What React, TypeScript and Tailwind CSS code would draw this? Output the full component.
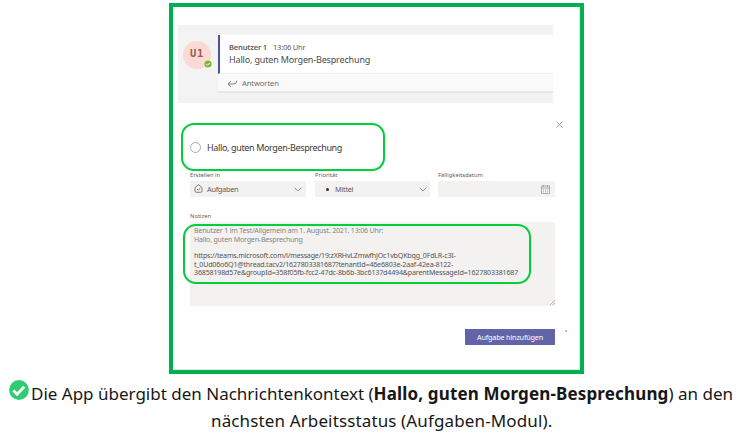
import React from "react";

function MessageCard() {
  return (
    <div className="ml-[5px] mt-[18px] flex h-[78px] w-[375px] bg-[#f3f3f3] pt-[10px]">
      <div className="relative ml-[5px] mt-[6px] flex h-[28px] w-[28px] shrink-0 items-center justify-center rounded-full bg-[#fbdad5] pb-[3px] font-['DejaVu_Sans_Mono',monospace] text-[10.5px] font-bold tracking-[0.6px] text-[#9a5a52]">
        <span>U1</span>
        <svg className="absolute -right-px bottom-px h-[8px] w-[8px]" viewBox="0 0 8 8">
          <circle cx="4" cy="4" r="3.6" fill="#7fba3a" />
          <path d="M2.3 4.1 3.5 5.3 5.7 3" fill="none" stroke="#fff" strokeWidth=".9" />
        </svg>
      </div>
      <div className="ml-[7px] h-[58px] flex-1 border-b-2 border-[#e6e6e6] bg-[#fafafa]">
        <div className="h-[39px] border-b border-l-2 border-b-[#f0f0f0] border-l-[#4f50a0] bg-white pl-[9px] pt-[7px]">
          <div className="flex h-[12px] items-center text-[7.6px] text-[#5c5c5c]">
            <span className="w-[44px] font-semibold tracking-[-0.2px]">Benutzer 1</span>
            <span className="tracking-[-0.28px]">13:06 Uhr</span>
          </div>
          <div className="h-[13px] text-[9px] leading-[12px] tracking-[-0.16px] text-[#4c4c4c]">Hallo, guten Morgen-Besprechung</div>
        </div>
        <div className="flex h-[18px] items-center pl-[9px] text-[7.6px] tracking-[-0.1px] text-[#6c6c6c]">
          <svg className="mr-[4px] h-[8px] w-[11px]" viewBox="0 0 11 8" fill="none" stroke="#707070" strokeWidth=".9">
            <path d="M4 2 1 5l3 3M1 5h5.500Q9.500 5 10 1.500" />
          </svg>
          <span className="pt-px">Antworten</span>
        </div>
      </div>
    </div>
  );
}

function Chevron() {
  return (
    <svg className="h-[5px] w-[8px]" viewBox="0 0 8 5" fill="none" stroke="#777" strokeWidth=".8">
      <path d="M.7.700 4 4 7.300.700" />
    </svg>
  );
}

function Fields() {
  return (
    <div className="flex h-[26px] text-[#5c5c5c]">
      <div className="w-[125px]">
        <div className="h-[10px] text-[5.8px] leading-[8px]">Erstellen in</div>
        <div className="flex h-[16px] w-[116px] items-center rounded-[1px] bg-[#f3f2f1] pl-[4px] pr-[4px] text-[7.4px] tracking-[-0.32px]">
          <svg className="mb-px mr-[4px] h-[9px] w-[9px]" viewBox="0 0 9 9" fill="none" stroke="#555" strokeWidth=".7">
            <path d="M1 3.600 4.500.700 8 3.600V7Q8 8.300 6.700 8.300H2.300Q1 8.300 1 7ZM3 5l1.200 1.200L6.400 4" />
          </svg>
          <span className="flex-1 pt-[2px]">Aufgaben</span>
          <Chevron />
        </div>
      </div>
      <div className="w-[123px]">
        <div className="h-[10px] text-[5.8px] leading-[8px]">Priorität</div>
        <div className="flex h-[16px] w-[115px] items-center rounded-[1px] bg-[#f3f2f1] pl-[11px] pr-[3px] text-[7.4px] tracking-[-0.3px]">
          <span className="mr-[6px] h-[3px] w-[3px] rounded-full bg-[#333]" />
          <span className="flex-1 pt-[2px]">Mittel</span>
          <Chevron />
        </div>
      </div>
      <div>
        <div className="h-[10px] text-[5.8px] leading-[8px]">Fälligkeitsdatum</div>
        <div className="flex h-[16px] w-[117px] items-center justify-end rounded-[1px] bg-[#f3f2f1] pr-[5px]">
          <svg className="h-[9px] w-[9px]" viewBox="0 0 9 9" fill="none" stroke="#999" strokeWidth=".8">
            <path d="M.5 1h8v7.500h-8zM.5 3h8M2.500 0v2M6.500 0v2" />
            <path d="M2 5h5M2 6.800h5" strokeDasharray="1 1" />
          </svg>
        </div>
      </div>
    </div>
  );
}

function Notes() {
  return (
    <div className="relative h-[84px] w-[365px] rounded-[1px] bg-[#f3f2f1] pl-[4px] pt-[4px] text-[7.1px] leading-[8.5px] whitespace-nowrap text-[#555]">
      <div className="tracking-[-0.21px] text-[#858585]">
        <div>Benutzer 1 im Test/Allgemein am 1. August. 2021. 13:06 Uhr:</div>
        <div>Hallo, guten Morgen-Besprechung</div>
      </div>
      <div className="mt-[8px] tracking-[-0.19px]">https://teams.microsoft.com/l/message/19:zXRHvLZmwfhJOc1vbQKbqg_0FdLR-c3I-</div>
      <div className="tracking-[-0.19px]">t_0Ud06o6Q1@thread.tacv2/1627803381687?tenantId=46e6803e-2aaf-42ea-8122-</div>
      <div className="tracking-[-0.17px]">36858198d57e&amp;groupId=358f05fb-fcc2-47dc-8b6b-3bc6137d4494&amp;parentMessageId=1627803381687</div>
      <div className="absolute -left-[7px] top-[2px] h-[60px] w-[348px] rounded-[13px] border-2 border-[#00cf3a]" />
      <svg className="absolute bottom-[1px] right-0 h-[5px] w-[5px]" viewBox="0 0 5 5" stroke="#999" strokeWidth=".7">
        <path d="M0 5 5 0M2.500 5 5 2.500" />
      </svg>
    </div>
  );
}

export default function App() {
  return (
    <div className="h-[437px] w-[738px] overflow-hidden bg-white pt-[3px] font-['Noto_Sans','Open_Sans',sans-serif]">
      <div className="ml-[169px] flex h-[371px] w-[415px] flex-col border-4 border-[#00b050] bg-white shadow-[inset_-1px_-1px_0_#d9efe3]">
        <MessageCard />
        <div className="mt-[18px] flex h-[50px] justify-between pl-[8px] pr-[17px]">
          <div className="mt-[2px] flex h-[48px] w-[204px] items-center rounded-[13px] border-2 border-[#00cf3a] pl-[7px] text-[9px] tracking-[-0.36px] text-[#3a3a3a]">
            <span className="mr-[6px] h-[11px] w-[11px] rounded-full border border-[#aaa]" />
            <span className="pt-px">Hallo, guten Morgen-Besprechung</span>
          </div>
          <svg className="h-[7px] w-[7px]" viewBox="0 0 7 7" stroke="#888" strokeWidth=".8">
            <path d="M.5.500 6.500 6.500M6.500.500.500 6.500" />
          </svg>
        </div>
        <div className="pl-[17px]">
          <Fields />
          <div className="mt-[14px] h-[11px] pt-px text-[5.8px] leading-[8px] text-[#5c5c5c]">Notizen</div>
          <Notes />
        </div>
        <div className="mt-[23px] flex pl-[292px]">
          <button className="h-[16px] w-[90px] bg-[#6264a7] text-[7.2px] leading-[16px] tracking-[-0.15px] text-white">Aufgabe hinzufügen</button>
          <span className="ml-[10px] mt-[1px] h-[2px] w-[2px] bg-[#f5a0a0]" />
        </div>
      </div>
      <p className="ml-[9px] mt-[6px] w-[726px] text-[17px] leading-[27px] whitespace-nowrap text-[#171717]">
        <span className="flex h-[27px]">
          <svg className="mr-[2px] h-[20px] w-[20px]" viewBox="0 0 21 21">
            <circle cx="10.500" cy="10.500" r="10.400" fill="#2ecc71" />
            <path d="m4.500 11 4 4 7.500-8" fill="none" stroke="#fff" strokeWidth="3" />
          </svg>
          <span>Die App übergibt den Nachrichtenkontext (<b className="tracking-[0.15px]">Hallo, guten Morgen-Besprechung</b>) an den</span>
        </span>
        <span className="block pl-[202px] tracking-[0.13px]">nächsten Arbeitsstatus (Aufgaben-Modul).</span>
      </p>
    </div>
  );
}
